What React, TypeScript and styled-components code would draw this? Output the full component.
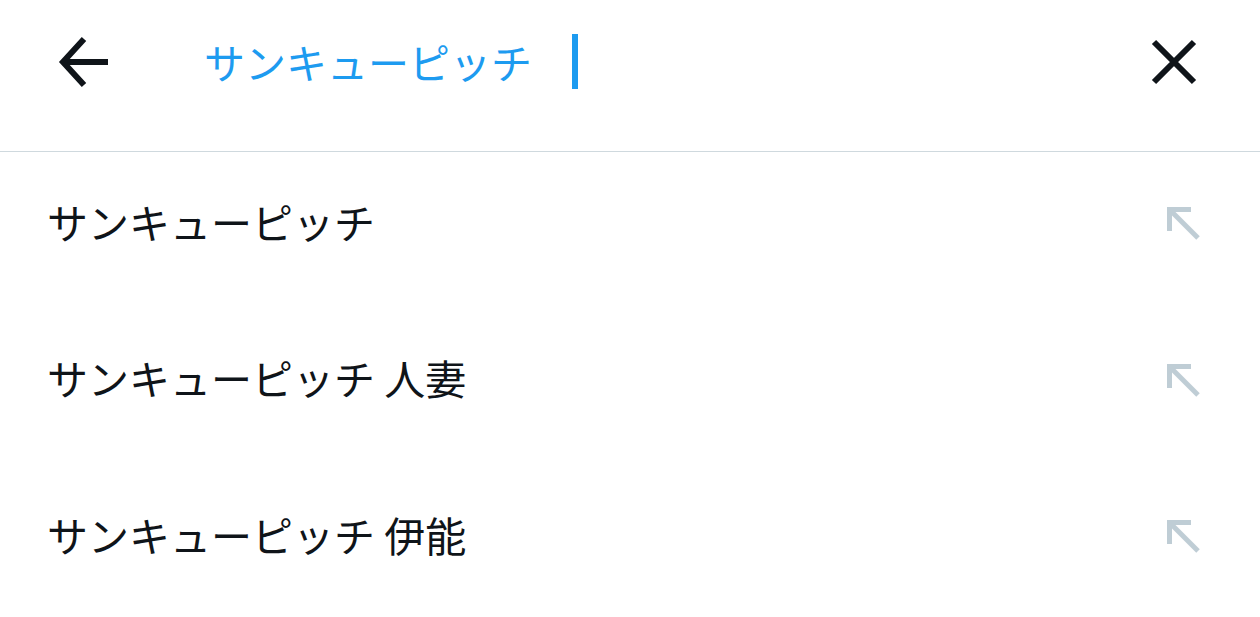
import React from "react";
import styled, { createGlobalStyle } from "styled-components";

const Global = createGlobalStyle`
  html, body { margin: 0; padding: 0; background: #ffffff; }
  body { font-family: "Noto Sans CJK JP", "Noto Sans", sans-serif; }
`;

const Page = styled.div`
  width: 1260px;
  background: #fff;
`;

const Header = styled.header`
  height: 151px;
  display: flex;
  align-items: center;
  border-bottom: 1px solid #cfd9de;
  padding: 0 60px 0 58px;
  box-sizing: content-box;
  width: 1142px;
`;

const IconButton = styled.button`
  border: none;
  background: none;
  padding: 0;
  display: flex;
  align-items: center;
  justify-content: center;
  width: 52px;
  height: 52px;
  color: #0f1419;
  cursor: pointer;
  margin-top: -28px;
`;

const SearchField = styled.div`
  flex: 1;
  display: flex;
  align-items: center;
  margin-left: 94px;
  margin-top: -28px;
`;

const Query = styled.span`
  font-size: 41px;
  color: #1d9bf0;
  line-height: 1;
`;

const Caret = styled.span`
  display: inline-block;
  width: 6px;
  height: 55px;
  background: #1d9bf0;
  margin-left: 40px;
`;

const List = styled.ul`
  list-style: none;
  margin: 0;
  padding: 0;
`;

const Row = styled.li`
  height: 156.5px;
  display: flex;
  align-items: center;
  justify-content: space-between;
  padding: 0 60px 0 47px;
  margin-top: -9px;
  & + & { margin-top: 0; }
`;

const Suggestion = styled.span`
  font-size: 41px;
  color: #0f1419;
  line-height: 1;
`;

const FillIcon = styled.span`
  width: 34px;
  height: 34px;
  display: flex;
  margin-top: 4px;
`;

const BackArrow = () => (
  <svg width="52" height="52" viewBox="0 0 52 52" fill="none">
    <path d="M50 26H7" stroke="#0f1419" strokeWidth="6" />
    <path d="M26 3L5 26L26 49" stroke="#0f1419" strokeWidth="6" strokeLinejoin="miter" />
  </svg>
);

const Close = () => (
  <svg width="52" height="52" viewBox="0 0 52 52" fill="none">
    <path d="M6 6L46 46M46 6L6 46" stroke="#0f1419" strokeWidth="6" />
  </svg>
);

const UpLeft = () => (
  <svg width="34" height="34" viewBox="0 0 34 34" fill="none">
    <path d="M3.5 25V3.5H25" stroke="#bfcdd5" strokeWidth="5" />
    <path d="M3.5 3.5L32 32" stroke="#bfcdd5" strokeWidth="5" />
  </svg>
);

const suggestions = [
  "サンキューピッチ",
  "サンキューピッチ 人妻",
  "サンキューピッチ 伊能",
];

export default function App() {
  return (
    <Page>
      <Global />
      <Header>
        <IconButton aria-label="戻る"><BackArrow /></IconButton>
        <SearchField>
          <Query>サンキューピッチ</Query>
          <Caret />
        </SearchField>
        <IconButton aria-label="クリア"><Close /></IconButton>
      </Header>
      <List>
        {suggestions.map((s) => (
          <Row key={s}>
            <Suggestion>{s}</Suggestion>
            <FillIcon><UpLeft /></FillIcon>
          </Row>
        ))}
      </List>
    </Page>
  );
}
